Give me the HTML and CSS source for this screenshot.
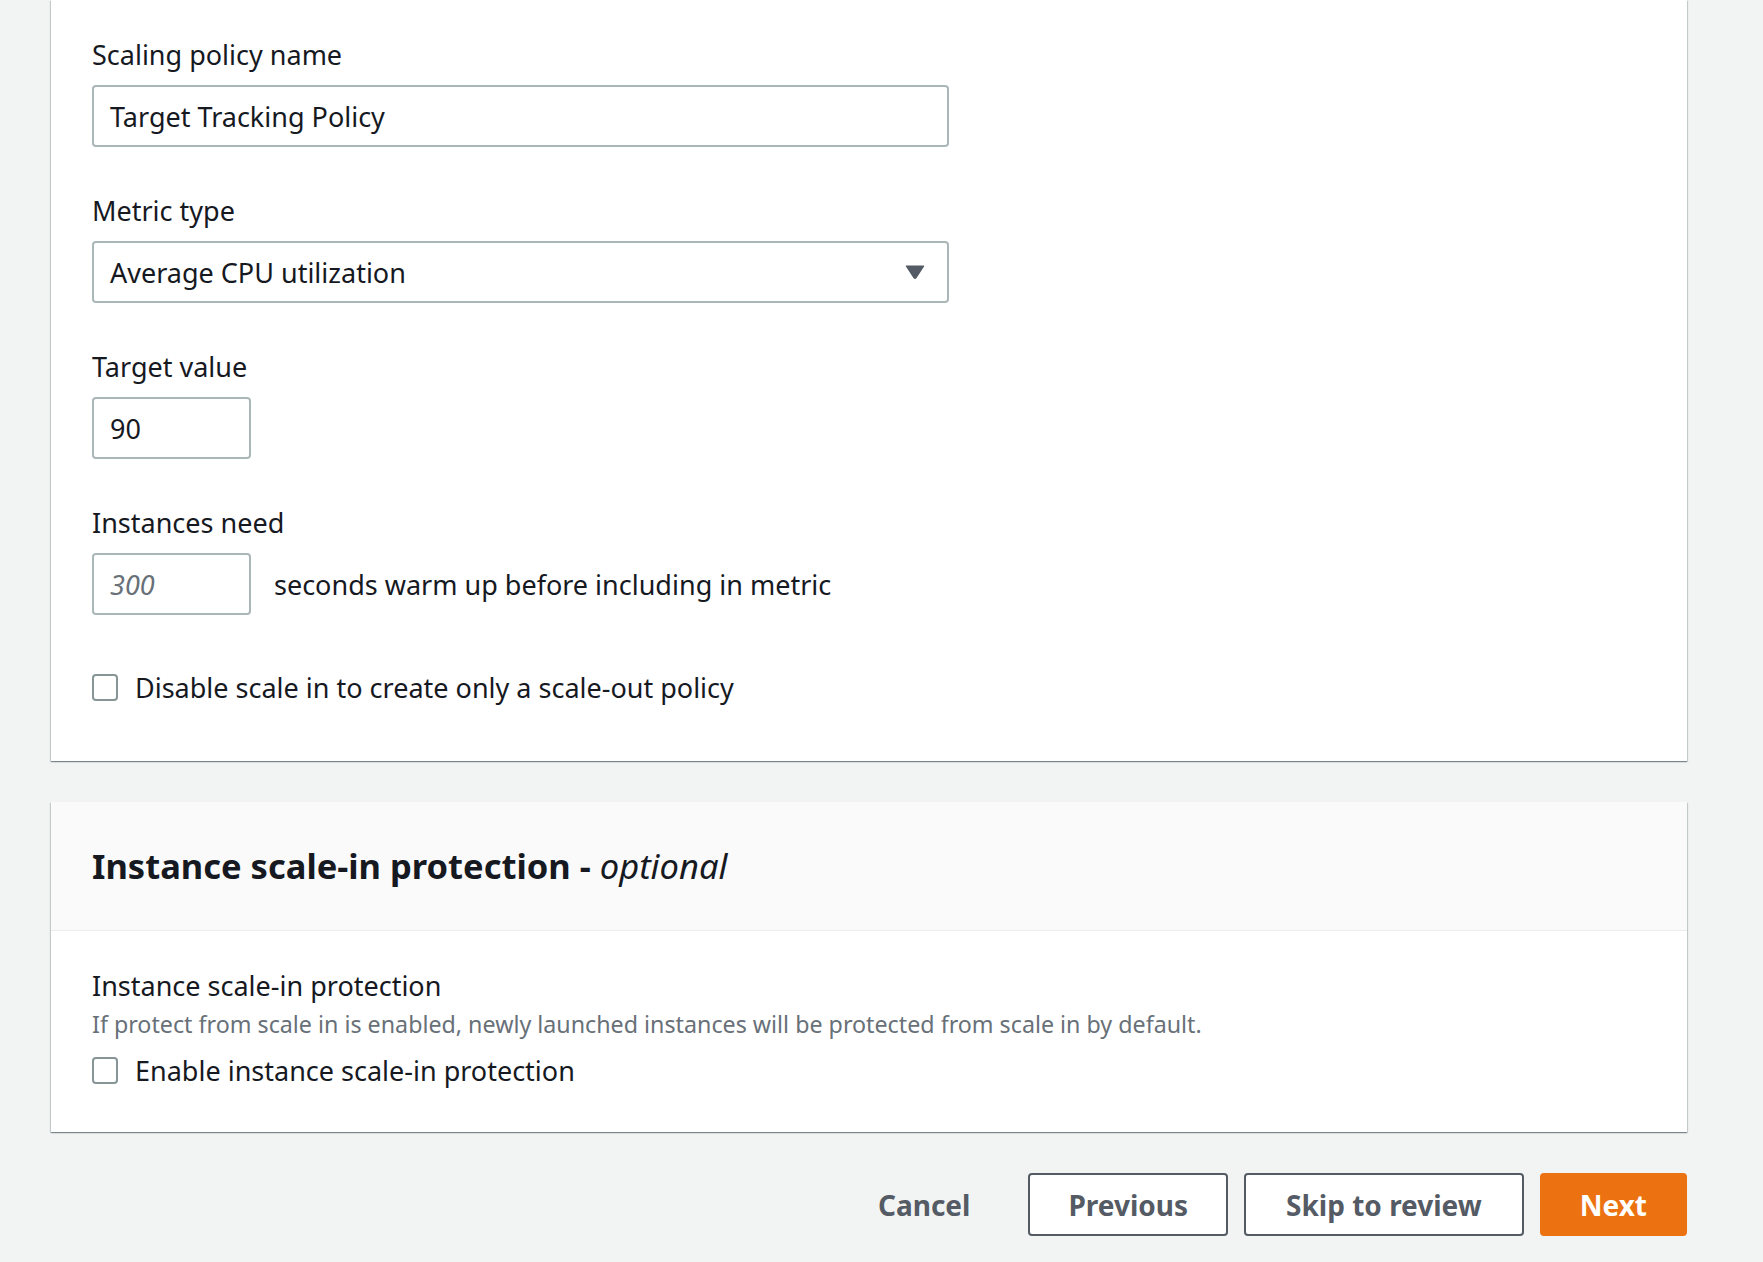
FILE: index.html
```html
<!DOCTYPE html>
<html lang="en">
<head>
<meta charset="utf-8">
<title>Configure scaling policies</title>
<link rel="stylesheet" href="styles.css">
</head>
<body>
<div class="page">
  <section class="card card-first">
    <div class="card-body">
      <div class="field">
        <label class="label">Scaling policy name</label>
        <div class="input input-wide">Target Tracking Policy</div>
      </div>
      <div class="field">
        <label class="label">Metric type</label>
        <div class="input input-wide select">
          <span>Average CPU utilization</span>
          <svg class="caret" width="20" height="14" viewBox="0 0 20 14"><path d="M1.5 1.2 H18.5 L11 12.6 Q10 13.8 9 12.6 Z" fill="#545b64" stroke="#545b64" stroke-width="1.4" stroke-linejoin="round"/></svg>
        </div>
      </div>
      <div class="field">
        <label class="label">Target value</label>
        <div class="input input-small">90</div>
      </div>
      <div class="field field-last">
        <label class="label">Instances need</label>
        <div class="inline-row">
          <div class="input input-small placeholder">300</div>
          <span class="inline-text">seconds warm up before including in metric</span>
        </div>
      </div>
      <div class="check-row">
        <span class="checkbox"></span>
        <span class="check-text">Disable scale in to create only a scale-out policy</span>
      </div>
    </div>
  </section>

  <section class="card card-second">
    <header class="card-header">
      <h2 class="heading">Instance scale-in protection - <i class="optional">optional</i></h2>
    </header>
    <div class="card-body card-body-second">
      <div class="label">Instance scale-in protection</div>
      <div class="desc">If protect from scale in is enabled, newly launched instances will be protected from scale in by default.</div>
      <div class="check-row check-row-second">
        <span class="checkbox"></span>
        <span class="check-text">Enable instance scale-in protection</span>
      </div>
    </div>
  </section>

  <div class="actions">
    <button class="btn btn-link">Cancel</button>
    <button class="btn btn-normal btn-prev">Previous</button>
    <button class="btn btn-normal btn-skip">Skip to review</button>
    <button class="btn btn-primary">Next</button>
  </div>
</div>
</body>
</html>
```
FILE: styles.css
```css
* { box-sizing: border-box; }
html, body {
  margin: 0;
  padding: 0;
  background: #f2f3f3;
}
body {
  font-family: "Noto Sans", "Open Sans", sans-serif;
  color: #16191f;
  font-size: 27px;
  height: 1262px;
  overflow: hidden;
}
.page {
  margin-left: 51px;
  width: 1636px;
}
.card {
  background: #fff;
  box-shadow: 0 1px 1px 0 rgba(0,28,36,.3), 1px 1px 1px 0 rgba(0,28,36,.15), -1px 1px 1px 0 rgba(0,28,36,.15);
}
.card-body {
  padding: 37px 41px 56px;
}
.field {
  display: flex;
  flex-direction: column;
  align-items: flex-start;
  margin-bottom: 46px;
}
.field-last { margin-bottom: 54px; }
.label {
  display: block;
  line-height: 36px;
  height: 36px;
  margin-bottom: 12px;
  font-size: 27px;
}
.input {
  height: 62px;
  border: 2px solid #aab7b8;
  border-radius: 4px;
  padding: 0 16px;
  display: flex;
  align-items: center;
  font-size: 27px;
  background: #fff;
}
.input-wide { width: 857px; }
.input-small { width: 159px; }
.select { justify-content: space-between; padding-right: 22px; }
.caret { display: block; }
.placeholder { color: #687078; font-style: italic; }
.inline-row {
  display: flex;
  align-items: center;
  gap: 23px;
}
.check-row {
  display: flex;
  align-items: center;
  gap: 17px;
  height: 36px;
}
.checkbox {
  width: 26px;
  height: 27px;
  border: 2px solid #879596;
  border-radius: 4px;
  background: #fff;
  flex: none;
}
.card-second { margin-top: 41px; }
.card-header {
  background: #fafafa;
  border-bottom: 1px solid #eaeded;
  height: 129px;
  padding: 0 41px;
  display: flex;
  align-items: center;
}
.heading {
  margin: 0;
  font-size: 34.5px;
  font-weight: 700;
  line-height: 44px;
}
.optional { font-weight: 400; }
.card-body-second {
  padding: 37px 41px 44px;
}
.card-body-second .label { margin-bottom: 5px; }
.desc {
  font-size: 23.25px;
  line-height: 30px;
  color: #687078;
  margin-bottom: 13px;
}
.actions {
  display: flex;
  justify-content: flex-end;
  align-items: center;
  gap: 16px;
  margin-top: 41px;
}
.btn {
  font-family: "Noto Sans", "Open Sans", sans-serif;
  font-size: 28px;
  font-weight: 700;
  height: 63px;
  border-radius: 4px;
  padding: 0 40px;
  cursor: pointer;
}
.btn-link {
  background: transparent;
  border: 2px solid transparent;
  color: #545b64;
}
.btn-normal {
  background: #fff;
  border: 2px solid #545b64;
  color: #545b64;
}
.btn-prev { padding: 0 38px; }
.btn-primary {
  background: #ec7211;
  border: 2px solid #ec7211;
  color: #fff;
  padding: 0 38px;
}
```
